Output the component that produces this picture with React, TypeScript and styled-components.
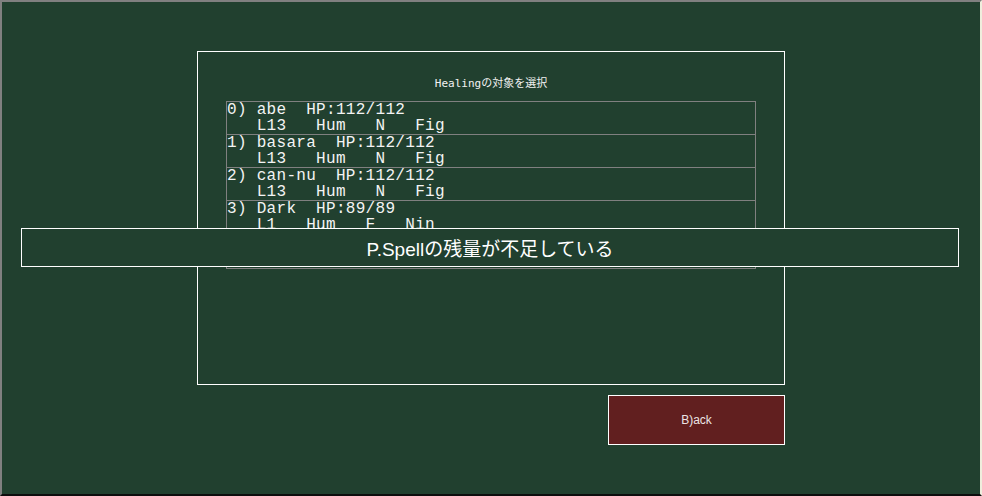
import * as React from "react";
import styled, { createGlobalStyle } from "styled-components";

interface IMember {
  no: number;
  name: string;
  hp: string;
  level: string;
  race: string;
  align: string;
  job: string;
}

const party: IMember[] = [
  { no: 0, name: "abe", hp: "112/112", level: "L13", race: "Hum", align: "N", job: "Fig" },
  { no: 1, name: "basara", hp: "112/112", level: "L13", race: "Hum", align: "N", job: "Fig" },
  { no: 2, name: "can-nu", hp: "112/112", level: "L13", race: "Hum", align: "N", job: "Fig" },
  { no: 3, name: "Dark", hp: "89/89", level: "L1", race: "Hum", align: "F", job: "Nin" },
];

const GlobalStyle = createGlobalStyle`
  html, body {
    margin: 0;
    padding: 0;
    background: #21402f;
  }
  * {
    box-sizing: border-box;
  }
`;

const App: React.FunctionComponent = () => {
  //***********Render UI*****************
  const renderMember = (m: IMember) => {
    const line1 = `${m.no}) ${m.name}  HP:${m.hp}`;
    const line2 = `   ${m.level}   ${m.race}   ${m.align}   ${m.job}`;
    return (
      <MemberRow key={m.no}>
        <MemberLine>{line1}</MemberLine>
        <MemberLine>{line2}</MemberLine>
      </MemberRow>
    );
  };

  return (
    <>
      <GlobalStyle />
      <Screen>
        <Column>
          <Dialog>
            <Title>Healingの対象を選択</Title>
            <MemberList>{party.map(renderMember)}</MemberList>
          </Dialog>
          <BackButton>B)ack</BackButton>
        </Column>
        <MessageBar>P.Spellの残量が不足している</MessageBar>
      </Screen>
    </>
  );
};

const Screen = styled.div`
  position: relative;
  width: 982px;
  height: 496px;
  background: #21402f;
  border-style: solid;
  border-width: 2px;
  border-color: #808080 #efeedd #0d0d0d #808080;
  padding: 49px 0 0 195px;
`;

const Column = styled.div`
  width: 588px;
  display: flex;
  flex-direction: column;
  gap: 10px;
`;

const Dialog = styled.div`
  width: 588px;
  height: 334px;
  border: 1px solid #ffffff;
  display: flex;
  flex-direction: column;
  align-items: center;
  padding-top: 25px;
`;

const Title = styled.div`
  font-family: "DejaVu Sans Mono", "Noto Sans CJK JP", monospace;
  font-size: 11px;
  line-height: 14px;
  color: #f2f2f2;
  margin-bottom: 10px;
`;

const MemberList = styled.div`
  align-self: flex-start;
  margin-left: 28px;
  width: 530px;
  height: 168px;
  border: 1px solid #808080;
  display: flex;
  flex-direction: column;
`;

const MemberRow = styled.div`
  height: 33px;
  border-bottom: 1px solid #808080;
  display: flex;
  flex-direction: column;
`;

const MemberLine = styled.div`
  font-family: "Liberation Mono", "DejaVu Sans Mono", monospace;
  font-size: 16px;
  letter-spacing: 0.3px;
  line-height: 16px;
  color: #f4f4f4;
  white-space: pre;
`;

const BackButton = styled.button`
  align-self: flex-end;
  width: 177px;
  height: 50px;
  background: #611f1f;
  border: 1px solid #ffffff;
  color: #ece4e4;
  font-family: "Liberation Sans", Arial, sans-serif;
  font-size: 12px;
  padding: 0;
  cursor: pointer;
`;

const MessageBar = styled.div`
  position: absolute;
  left: 19px;
  top: 226px;
  width: 938px;
  height: 39px;
  background: #21402f;
  border: 1px solid #ffffff;
  display: flex;
  align-items: center;
  justify-content: center;
  font-family: "Liberation Sans", "Noto Sans CJK JP", sans-serif;
  font-size: 19px;
  color: #ffffff;
`;

export default App;
